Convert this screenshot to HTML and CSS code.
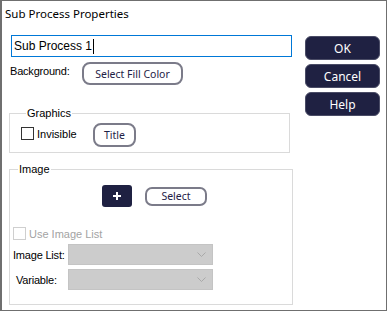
FILE: index.html
```html
<!DOCTYPE html>
<html lang="en">
<head>
    <meta charset="UTF-8">
    <title>Sub Process Properties</title>
    <link rel="stylesheet" href="styles.css">
</head>
<body>
    <div class="dialog">
        <div class="titlebar">Sub Process Properties</div>

        <div class="main">
            <div class="left">
                <div class="name-box">Sub Process 1<span class="caret"></span></div>

                <div class="bg-row">
                    <span class="label bg-label">Background:</span>
                    <button class="outline fill-btn">Select Fill Color</button>
                </div>

                <fieldset class="group graphics">
                    <legend>Graphics</legend>
                    <div class="graphics-row">
                        <label class="check invisible"><span class="box"></span>Invisible</label>
                        <button class="outline title-btn">Title</button>
                    </div>
                </fieldset>

                <fieldset class="group image">
                    <legend>Image</legend>
                    <div class="image-row">
                        <button class="plus-btn">
                            <svg width="8" height="8" viewBox="0 0 8 8"><path d="M4 0v8M0 4h8" stroke="#fff" stroke-width="2"/></svg>
                        </button>
                        <button class="outline select-btn">Select</button>
                    </div>
                    <label class="check disabled"><span class="box"></span>Use Image List</label>
                    <div class="combo-row">
                        <span class="label combo-label">Image List:</span>
                        <div class="combo">
                            <svg width="9" height="5" viewBox="0 0 9 5"><path d="M0.5 0.5l4 4 4-4" fill="none" stroke="#a9a9a9" stroke-width="1"/></svg>
                        </div>
                    </div>
                    <div class="combo-row">
                        <span class="label combo-label var-label">Variable:</span>
                        <div class="combo">
                            <svg width="9" height="5" viewBox="0 0 9 5"><path d="M0.5 0.5l4 4 4-4" fill="none" stroke="#a9a9a9" stroke-width="1"/></svg>
                        </div>
                    </div>
                </fieldset>
            </div>

            <div class="right">
                <button class="dark">OK</button>
                <button class="dark">Cancel</button>
                <button class="dark">Help</button>
            </div>
        </div>
    </div>
</body>
</html>
```

FILE: styles.css
```css
body {
    margin: 0;
    background-color: #ffffff;
    font-family: "Liberation Sans", Arial, sans-serif;
    font-size: 11px;
    color: #000000;
}

.dialog {
    box-sizing: border-box;
    width: 387px;
    height: 311px;
    border: 1px solid #6f6f6f;
    border-left-width: 2px;
    background-color: #ffffff;
}

.titlebar {
    height: 27px;
    padding: 5px 0 0 3px;
    box-sizing: border-box;
    font-family: "Noto Sans", "Open Sans", sans-serif;
    font-size: 11.5px;
    line-height: 16px;
    color: #000000;
}

.main {
    display: flex;
    padding-left: 7px;
}

.left {
    width: 284px;
    display: flex;
    flex-direction: column;
}

.name-box {
    box-sizing: border-box;
    width: 281px;
    height: 22px;
    margin: 7px 0 0 2px;
    border: 1px solid #0078d7;
    padding-left: 2px;
    font-size: 12px;
    line-height: 20px;
    display: flex;
    align-items: center;
}

.caret {
    display: inline-block;
    width: 1px;
    height: 15px;
    margin-left: 1px;
    background-color: #000000;
}

.bg-row {
    display: flex;
    align-items: flex-start;
    margin-top: 5px;
}

.bg-label {
    width: 72px;
    padding: 3px 0 0 1px;
}

.label {
    letter-spacing: -0.2px;
}

button {
    font-family: "Noto Sans", "Open Sans", sans-serif;
    font-size: 10.5px;
    cursor: pointer;
    padding: 0;
}

.outline {
    box-sizing: border-box;
    background-color: #ffffff;
    border: 2px solid #7b7b89;
    border-radius: 8px;
    color: #1e2146;
}

.fill-btn {
    width: 101px;
    height: 23px;
}

.group {
    margin: 0;
    border: 1px solid #dadada;
    padding: 0;
    min-width: 0;
}

.group legend {
    margin-left: 5px;
    padding: 0 1px;
    line-height: 13px;
}

.graphics {
    width: 281px;
    box-sizing: border-box;
    margin-top: 22px;
    padding: 3px 10px 5px 11px;
}

.graphics-row {
    display: flex;
    align-items: center;
}

.check {
    display: flex;
    align-items: center;
    gap: 3px;
}

.box {
    box-sizing: border-box;
    width: 13px;
    height: 13px;
    border: 1px solid #333333;
    background-color: #ffffff;
}

.invisible {
    width: 72px;
    margin-top: -3px;
}

.title-btn {
    width: 43px;
    height: 24px;
}

.image {
    width: 284px;
    box-sizing: border-box;
    margin-top: 10px;
    padding: 9px 3px 14px 3px;
}

.image-row {
    display: flex;
    align-items: center;
    margin-left: 89px;
}

.plus-btn {
    width: 30px;
    height: 22px;
    border: none;
    border-radius: 3px;
    background-color: #1f2142;
    display: flex;
    align-items: center;
    justify-content: center;
}

.select-btn {
    width: 62px;
    height: 19px;
    margin-left: 13px;
    border-radius: 7px;
}

.check.disabled {
    margin-top: 20px;
    color: #a3a3a3;
}

.check.disabled .box {
    border-color: #cfcfcf;
}

.combo-row {
    display: flex;
    align-items: center;
    margin-top: 4px;
}

.combo-label {
    width: 55px;
}

.var-label {
    width: 52px;
    padding-left: 3px;
}

.combo {
    box-sizing: border-box;
    width: 145px;
    height: 21px;
    background-color: #cccccc;
    border: 1px solid #c4c4c4;
    display: flex;
    align-items: center;
    justify-content: flex-end;
    padding-right: 6px;
}

.right {
    display: flex;
    flex-direction: column;
    gap: 4px;
    margin: 8px 0 0 12px;
}

.dark {
    width: 75px;
    height: 24px;
    border: 1px solid #4a4c66;
    border-radius: 6px;
    background-color: #1f2142;
    color: #ffffff;
    font-size: 12px;
}
```
